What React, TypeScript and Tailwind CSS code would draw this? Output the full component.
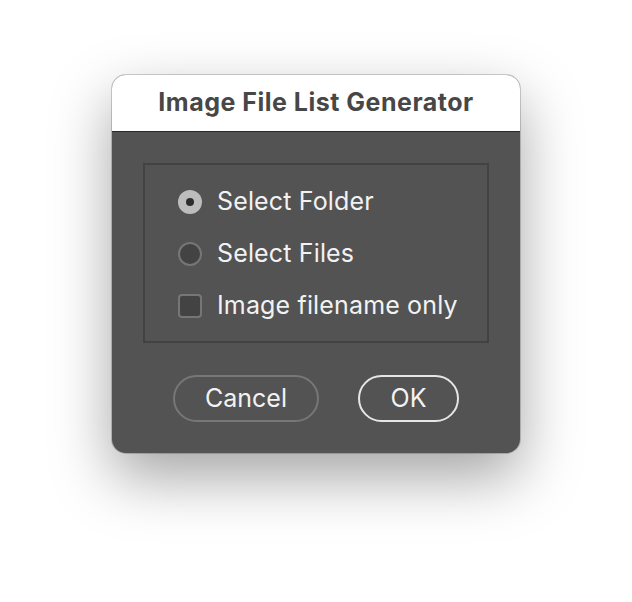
import React from "react";

function Radio({ checked }: { checked?: boolean }) {
  return checked ? (
    <div className="w-[24px] h-[24px] rounded-full bg-[#bdbdbd] flex items-center justify-center">
      <div className="w-[8px] h-[8px] rounded-full bg-[#2e2e2e]" />
    </div>
  ) : (
    <div className="w-[24px] h-[24px] rounded-full bg-[#434343] border-[2px] border-[#767676]" />
  );
}

export default function App() {
  return (
    <div
      className="w-[632px] h-[602px] bg-white flex justify-center pt-[75px]"
      style={{ fontFamily: "Inter, 'Noto Sans', sans-serif" }}
    >
      <div className="w-[408px] h-[378px] rounded-[14px] overflow-hidden bg-[#535353] shadow-[0_0_0_1px_rgba(0,0,0,0.18),0_24px_60px_rgba(0,0,0,0.36)] flex flex-col">
        <div className="h-[57px] bg-white border-b border-[#2a2a2a] flex items-center justify-center">
          <span className="text-[25px] font-bold text-[#474747] tracking-[0.5px]">Image File List Generator</span>
        </div>
        <div className="flex-1 px-[31px] pt-[31px] flex flex-col">
          <div className="h-[180px] border-[2px] border-[#424242] pt-[11px] pl-[33px] flex flex-col">
            <div className="h-[52px] flex items-center gap-[15px]">
              <Radio checked />
              <span className="text-[25px] tracking-[0.15px] text-[#f2f2f2]">Select Folder</span>
            </div>
            <div className="h-[52px] flex items-center gap-[15px]">
              <Radio />
              <span className="text-[25px] tracking-[0.15px] text-[#f2f2f2]">Select Files</span>
            </div>
            <div className="h-[52px] flex items-center gap-[15px]">
              <div className="w-[24px] h-[24px] rounded-[4px] bg-[#434343] border-[2px] border-[#767676]" />
              <span className="text-[25px] tracking-[0.15px] text-[#f2f2f2]">Image filename only</span>
            </div>
          </div>
          <div className="flex justify-center gap-[39px] mt-[32px]">
            <div className="w-[146px] h-[47px] rounded-full border-[2px] border-[#777777] flex items-center justify-center text-[25px] text-[#f2f2f2]">
              Cancel
            </div>
            <div className="w-[101px] h-[47px] rounded-full border-[2px] border-[#e6e6e6] flex items-center justify-center text-[25px] text-[#f2f2f2]">
              OK
            </div>
          </div>
        </div>
      </div>
    </div>
  );
}
